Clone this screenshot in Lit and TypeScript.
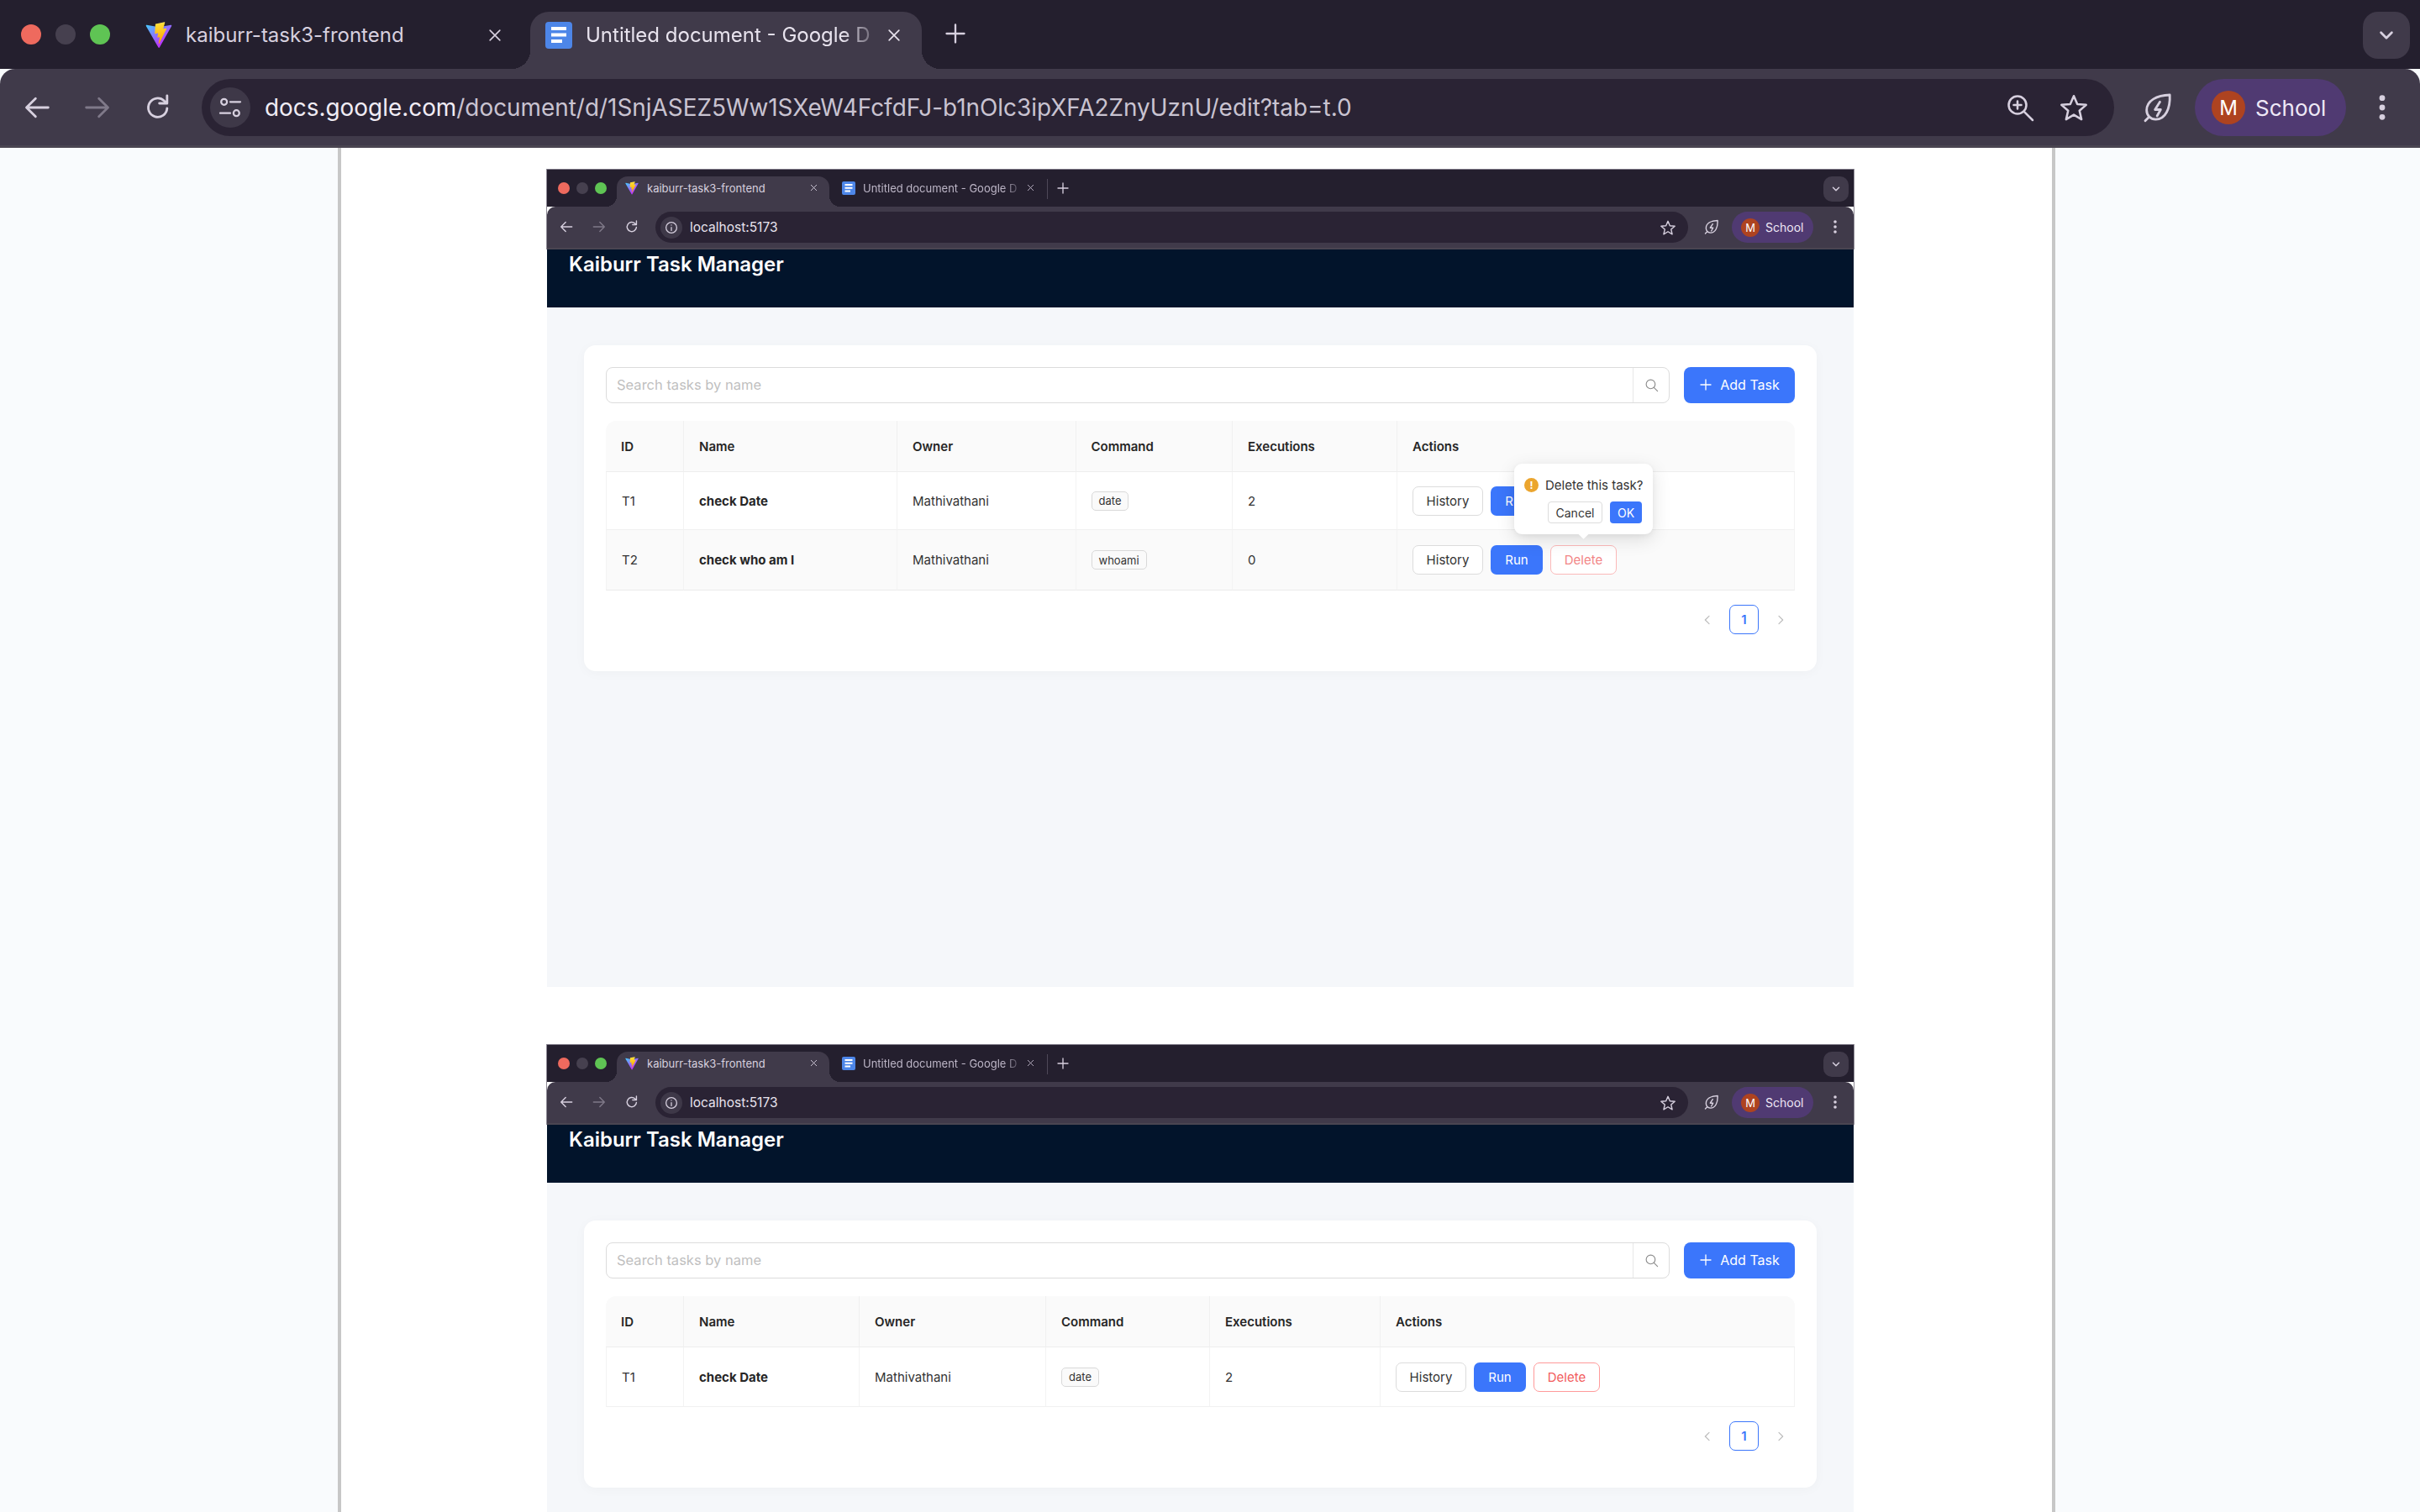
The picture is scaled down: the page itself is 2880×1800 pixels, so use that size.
import { LitElement, html, css, svg } from "lit";
import { customElement, property } from "lit/decorators.js";

const ic = (body: unknown, cls = "", sw = 2) => html`<svg class=${cls} viewBox="0 0 24 24" fill="none" stroke="currentColor" stroke-width=${sw} stroke-linecap="round" stroke-linejoin="round">${body}</svg>`;
const back = (c = "") => ic(svg`<path d="M20 12H5M11 5.500 4.500 12l6.500 6.500"/>`, c);
const fwd = (c = "") => ic(svg`<path d="M4 12h15M13 5.500l6.500 6.500-6.500 6.500"/>`, c);
const reload = (c = "") => ic(svg`<path d="M18.500 12.500a6.700 6.700 0 1 1-2.100-5.300L18.500 9M18.500 3.500V9H13"/>`, c);
const tune = (c = "") => ic(svg`<circle cx="6.500" cy="7" r="2.600"/><path d="M12 7h9M3 17h9"/><circle cx="17.500" cy="17" r="2.600"/>`, c);
const info = (c = "") => ic(svg`<circle cx="12" cy="12" r="8.500"/><path d="M12 11.500v5M12 7.800v.2"/>`, c);
const zoomI = (c = "") => ic(svg`<circle cx="10" cy="10" r="7"/><path d="M15.200 15.200 22 22M10 7v6M7 10h6"/>`, c);
const star = (c = "") => ic(svg`<path d="m12 2.800 2.800 6.500 7 .6-5.300 4.600 1.600 6.900-6.100-3.700-6.100 3.700 1.600-6.900-5.300-4.600 7-.6z"/>`, c);
const leaf = (c = "") => ic(svg`<path d="M20.500 3c-9 .3-16.500 3.800-16.500 11 0 3.600 2.800 6.500 6.500 6.500 7 0 10.500-8 10-17.500zM3 21.500l2.600-2.600M13.500 8 10 13.500h4L11.500 18"/>`, c);
const chev = (c = "") => ic(svg`<path d="m5 8.500 7 7 7-7"/>`, c, 3);
const xI = (c = "") => ic(svg`<path d="M5 5l14 14M19 5 5 19"/>`, c);
const plus = (c = "") => ic(svg`<path d="M12 3v18M3 12h18"/>`, c);
const dots = (c = "") => html`<svg class=${c} viewBox="0 0 24 24" fill="currentColor"><circle cx="12" cy="4" r="2.400"/><circle cx="12" cy="12" r="2.400"/><circle cx="12" cy="20" r="2.400"/></svg>`;
const search = (c = "") => ic(svg`<circle cx="10.500" cy="10.500" r="7.500"/><path d="m16 16 6 6"/>`, c, 1.6);
const left = (c = "") => ic(svg`<path d="m15 5-7 7 7 7"/>`, c, 1.8);
const right = (c = "") => ic(svg`<path d="m9 5 7 7-7 7"/>`, c, 1.8);

let gid = 0;
const vite = (c = "") => {
  const a = `va${++gid}`, b = `vb${gid}`;
  return html`<svg class=${c} viewBox="0 0 410 404">
    <defs>
      <linearGradient id=${a} x1="6" y1="33" x2="235" y2="344" gradientUnits="userSpaceOnUse"><stop stop-color="#41D1FF"/><stop offset="1" stop-color="#BD34FE"/></linearGradient>
      <linearGradient id=${b} x1="194" y1="8" x2="236" y2="293" gradientUnits="userSpaceOnUse"><stop stop-color="#FFEA83"/><stop offset=".08" stop-color="#FFDD35"/><stop offset="1" stop-color="#FFA800"/></linearGradient>
    </defs>
    <path fill="url(#${a})" d="M399.641 59.525 215.643 388.545c-3.799 6.793-13.559 6.833-17.415.073L10.582 59.556C6.38 52.19 12.68 43.266 21.028 44.76l184.195 32.923c1.175.21 2.378.208 3.553-.006l180.343-32.87c8.32-1.517 14.649 7.337 10.522 14.718Z"/>
    <path fill="url(#${b})" d="M292.965 1.574 156.801 28.255a5 5 0 0 0-4.03 4.611l-8.376 141.464c-.197 3.332 2.863 5.918 6.115 5.168l37.91-8.749c3.547-.818 6.752 2.306 6.023 5.873l-11.263 55.153c-.758 3.712 2.727 6.886 6.352 5.785l23.415-7.114c3.63-1.102 7.118 2.081 6.35 5.796l-17.899 86.633c-1.12 5.419 6.088 8.374 9.094 3.728l2.008-3.103 110.954-221.428c1.858-3.707-1.346-7.935-5.418-7.15l-39.022 7.532c-3.667.707-6.787-2.708-5.752-6.296l25.469-88.291c1.036-3.594-2.095-7.012-5.766-6.293Z"/>
  </svg>`;
};
const docs = (c = "") => html`<svg class=${c} viewBox="0 0 32 32"><rect width="32" height="32" rx="4" fill="#4d86e8"/><rect x="7" y="6" width="18" height="4" fill="#fff"/><rect x="7" y="13.500" width="18" height="4" fill="#fff"/><rect x="7" y="21" width="13" height="4" fill="#fff"/></svg>`;

const sharedChrome = css`
  svg { display: block; flex: none; }
  .strip { display: flex; background: #241f2e; color: #d7d0df; align-items: flex-end; }
  .lights { display: flex; align-self: flex-start; }
  .dot { border-radius: 50%; display: block; }
  .red { background: #ee6a5e; }
  .gray { background: #46404f; }
  .green { background: #5fc454; }
  .tab { display: flex; align-items: center; position: relative; box-sizing: border-box; }
  .tab.active { background: #403a4a; border-radius: var(--r) var(--r) 0 0; }
  .tab.active::before, .tab.active::after {
    content: ""; position: absolute; bottom: 0; width: var(--r); height: var(--r);
  }
  .tab.active::before { right: 100%; background: radial-gradient(circle at 0 0, transparent var(--r), #403a4a var(--r)); }
  .tab.active::after { left: 100%; background: radial-gradient(circle at 100% 0, transparent var(--r), #403a4a var(--r)); }
  .title { flex: 1; min-width: 0; white-space: nowrap; }
  .fade { -webkit-mask-image: linear-gradient(90deg, #000 88%, rgba(0,0,0,.15) 100%); mask-image: linear-gradient(90deg, #000 88%, rgba(0,0,0,.15) 100%); }
  .spacer { flex: 1; }
  .chevpill { display: flex; align-items: center; justify-content: center; background: #403a4a; align-self: flex-start; }
  .toolbar { display: flex; background: #403a4a; color: #d7d0df; box-sizing: border-box; align-items: flex-start; }
  .dim { color: #7f7989; }
  .omni { display: flex; flex: 1; min-width: 0; align-items: center; background: #2a2334; box-sizing: border-box; }
  .site { display: flex; align-items: center; justify-content: center; background: #3e3848; border-radius: 50%; flex: none; }
  .url { flex: 1; min-width: 0; white-space: nowrap; color: #c9c3d1; }
  .url b { font-weight: 400; color: #f0ecf4; }
  .pill { display: flex; align-items: center; background: #503a72; flex: none; box-sizing: border-box; color: #eee8f6; }
  .avatar { display: flex; align-items: center; justify-content: center; border-radius: 50%; background: #ae4320; color: #fff; flex: none; }
`;

@customElement("outer-chrome")
class OuterChrome extends LitElement {
  static styles = [sharedChrome, css`
    :host { display: block; --r: 22px; font-family: Inter, "Liberation Sans", sans-serif; }
    .strip { height: 82px; padding: 0 12px 0 25px; }
    .lights { gap: 17px; margin-top: 29px; }
    .dot { width: 24px; height: 24px; }
    .tab { height: 68px; padding-bottom: 13px; font-size: 24px; }
    .t1 { width: 480px; margin-left: 20px; padding-left: 22px; color: #d7d0df; }
    .t2 { width: 466px; padding-left: 18px; color: #e8e3ee; }
    .fav { width: 32px; height: 32px; }
    .t1 .title { margin-left: 16px; }
    .t2 .title { margin-left: 16px; }
    .x { width: 20px; height: 20px; }
    .t1 .x { margin-right: 32px; }
    .t2 .x { margin-right: 23px; margin-left: 10px; }
    .plus { width: 28px; height: 28px; margin: 0 0 28px 26px; }
    .chevpill { width: 56px; height: 56px; border-radius: 18px; margin-top: 14px; }
    .chev { width: 22px; height: 22px; }
    .toolbar { height: 94px; padding: 12px 28px 0 24px; border-bottom: 3px solid #4a4551; border-radius: 18px 18px 0 0; }
    .toolbar svg { stroke-width: 1.700; }
    .nav { width: 40px; height: 40px; margin: 14px 32px 0 0; }
    .omni { height: 68px; border-radius: 34px; padding: 0 30px 0 10px; }
    .site { width: 48px; height: 48px; }
    .site svg { width: 32px; height: 32px; }
    .url { margin-left: 17px; font-size: 27.900px; }
    .oi { width: 36px; height: 36px; }
    .oi.z { margin-right: 28px; }
    .leaf { width: 40px; height: 40px; margin: 14px 24px 0 32px; }
    .pill { width: 180px; height: 68px; border-radius: 34px; padding-left: 20px; font-size: 26px; }
    .avatar { width: 40px; height: 40px; font-size: 24px; margin-right: 12px; }
    .dots { width: 34px; height: 34px; margin: 17px 0 0 26px; }
  `];
  render() {
    return html`
      <div class="strip">
        <div class="lights"><span class="dot red"></span><span class="dot gray"></span><span class="dot green"></span></div>
        <div class="tab t1">${vite("fav")}<span class="title">kaiburr-task3-frontend</span>${xI("x")}</div>
        <div class="tab t2 active">${docs("fav")}<span class="title fade">Untitled document - Google D</span>${xI("x")}</div>
        ${plus("plus")}
        <div class="spacer"></div>
        <div class="chevpill">${chev("chev")}</div>
      </div>
      <div class="toolbar">
        ${back("nav")}${fwd("nav dim")}${reload("nav")}
        <div class="omni">
          <div class="site">${tune()}</div>
          <div class="url"><b>docs.google.com</b>/document/d/1SnjASEZ5Ww1SXeW4FcfdFJ-b1nOlc3ipXFA2ZnyUznU/edit?tab=t.0</div>
          ${zoomI("oi z")}${star("oi")}
        </div>
        ${leaf("leaf")}
        <div class="pill"><span class="avatar">M</span>School</div>
        ${dots("dots")}
      </div>
    `;
  }
}

interface Row { id: string; name: string; owner: string; cmd: string; runs: number; h: number; hover?: boolean; }

@customElement("task-shot")
class TaskShot extends LitElement {
  @property({ type: Array }) cols: number[] = [];
  @property({ type: Array }) rows: Row[] = [];
  @property({ type: Boolean }) confirm = false;

  static styles = [sharedChrome, css`
    :host { display: block; --r: 13px; width: 1555px; font-family: Inter, "Liberation Sans", sans-serif; }
    .frame { border-top: 1px solid #7f7a88; box-shadow: -1px 0 0 #8d8994, 1px 0 0 #8d8994; }
    .strip { height: 44px; padding: 0 6px 0 13px; }
    .lights { gap: 8px; margin-top: 15px; }
    .dot { width: 14px; height: 14px; }
    .tab { height: 36px; padding-bottom: 9px; font-size: 13px; }
    .t1 { width: 253px; margin-left: 12px; padding-left: 10px; }
    .t2 { width: 259px; padding-left: 15px; color: #bdb6c7; }
    .sep { width: 1px; height: 24px; background: #4e4858; margin-bottom: 9px; flex: none; }
    .fav { width: 16px; height: 16px; }
    .t2 .fav { height: 18px; }
    .t1 .title { margin-left: 10px; }
    .t2 .title { margin-left: 9px; }
    .x { width: 11px; height: 11px; }
    .t1 .x { margin-right: 13px; }
    .t2 .x { margin-right: 14px; margin-left: 5px; }
    .plus { width: 16px; height: 16px; margin: 0 0 14px 10px; }
    .chevpill { width: 30px; height: 30px; border-radius: 10px; margin-top: 8px; }
    .chev { width: 12px; height: 12px; }
    .toolbar { height: 51px; padding: 6px 13px 0; border-radius: 10px 10px 0 0; border-bottom: 2px solid #4a4551; }
    .toolbar svg { stroke-width: 1.700; }
    .nav { width: 20px; height: 20px; margin: 8px 19px 0 0; }
    .nav.last { margin-right: 18px; }
    .omni { height: 37px; border-radius: 19px; padding: 0 14px 0 6px; }
    .site { width: 26px; height: 26px; }
    .site svg { width: 18px; height: 18px; }
    .url { margin-left: 9px; font-size: 15.500px; color: #e8e3ee; }
    .oi { width: 20px; height: 20px; }
    .leaf { width: 20px; height: 20px; margin: 8px 14px 0 18px; }
    .pill { width: 97px; height: 37px; border-radius: 19px; padding-left: 11px; font-size: 14px; }
    .avatar { width: 22px; height: 22px; font-size: 13px; margin-right: 7px; }
    .dots { width: 18px; height: 18px; margin: 9px 0 0 17px; }

    .header { height: 69px; box-sizing: border-box; background: #02142b; color: #fff; padding-left: 26px; font-size: 24px; font-weight: 600; line-height: 36px; }
    .main { background: #f5f7fa; padding: 45px 44px 0; min-height: 764px; box-sizing: content-box; }
    .card { background: #fff; border-radius: 14px; padding: 26px 26px 44px; box-shadow: 0 2px 14px rgba(0,0,0,.03); }
    .bar { display: flex; gap: 17px; }
    .searchbox { flex: 1; display: flex; height: 43px; box-sizing: border-box; border: 1.500px solid #dcdcdc; border-radius: 8px; overflow: hidden; }
    input { flex: 1; border: 0; outline: 0; padding: 0 12px 2px; font: inherit; font-size: 16.500px; background: transparent; min-width: 0; }
    input::placeholder { color: #bfbfbf; opacity: 1; }
    .sbtn { width: 42px; flex: none; display: flex; align-items: center; justify-content: center; border-left: 1px solid #e8e8e8; color: #8c8c8c; }
    .sbtn svg { width: 17px; height: 17px; }
    .add { width: 132px; height: 43px; box-sizing: border-box; padding-bottom: 1px; flex: none; display: flex; align-items: center; justify-content: center; gap: 9px; border-radius: 8px; background: #3b76fb; color: #fff; font-size: 16px; }
    .add svg { width: 16px; height: 16px; }

    table { width: 1415px; table-layout: fixed; border-collapse: separate; border-spacing: 0; margin-top: 21px; font-size: 15px; color: #333; }
    th { height: 61px; box-sizing: border-box; text-align: left; background: #fafafa; font-weight: 600; color: #262626; padding: 0 18px; border-bottom: 1px solid #eee; border-right: 1px solid #f0f0f0; }
    th:first-child { border-top-left-radius: 12px; }
    th:last-child { border-top-right-radius: 12px; border-right: 0; }
    td { box-sizing: border-box; padding: 0 18px; border-bottom: 1px solid #f0f0f0; border-right: 1px solid #f3f3f3; }
    td:first-child { border-left: 1px solid #f3f3f3; }
    tr.hover td { background: #fafafa; border-bottom-color: #ebebeb; }
    .name { font-weight: 700; color: #262626; }
    .tag { display: inline-flex; align-items: center; height: 23px; box-sizing: border-box; padding: 0 8px; background: #fafafa; border: 1px solid #d9d9d9; border-radius: 5px; font-size: 13px; vertical-align: middle; }
    .actions { position: relative; display: flex; gap: 9px; }
    .btn { height: 35px; box-sizing: border-box; display: flex; align-items: center; justify-content: center; border-radius: 7px; font-size: 15px; flex: none; }
    .hist { width: 84px; background: #fff; border: 1.500px solid #dcdcdc; color: #333; }
    .run { width: 62px; background: #3b76fb; color: #fff; }
    .del { width: 79px; background: #fff; border: 1.500px solid #ff9a9a; color: #f25c5c; }
    .del.soft { border-color: #fbb9b9; color: #f28686; }

    .pop { position: absolute; left: 121px; top: -97px; width: 165px; height: 84px; box-sizing: border-box; z-index: 2; background: #fff; border-radius: 9px; box-shadow: 0 6px 22px rgba(0,0,0,.12), 0 2px 6px rgba(0,0,0,.05); padding: 12px 12px 0; color: #333; }
    .pop::after { content: ""; position: absolute; left: 78px; bottom: -4px; width: 9px; height: 9px; background: #fff; transform: rotate(45deg); }
    .ptext { display: flex; align-items: center; gap: 8px; height: 26px; font-size: 15px; white-space: nowrap; }
    .warn { width: 17px; height: 17px; border-radius: 50%; background: #eba52e; color: #fff; font-size: 12px; font-weight: 700; display: flex; align-items: center; justify-content: center; flex: none; }
    .pbtns { display: flex; justify-content: flex-end; gap: 9px; margin: 7px 1px 0 0; }
    .pbtns div { height: 26px; box-sizing: border-box; display: flex; align-items: center; justify-content: center; border-radius: 4px; font-size: 14px; }
    .cancel { width: 65px; border: 1.500px solid #dcdcdc; }
    .ok { width: 38px; background: #3b76fb; color: #fff; }

    .pager { display: flex; justify-content: flex-end; align-items: center; margin-top: 17px; padding-right: 9px; color: #bdbdbd; }
    .pager svg { width: 16px; height: 16px; }
    .page { width: 35px; height: 35px; box-sizing: border-box; margin: 0 18px; border: 1.500px solid #3b76fb; border-radius: 7px; color: #3b76fb; display: flex; align-items: center; justify-content: center; font-size: 15px; font-weight: 600; }
  `];

  render() {
    return html`
      <div class="frame">
        <div class="strip">
          <div class="lights"><span class="dot red"></span><span class="dot gray"></span><span class="dot green"></span></div>
          <div class="tab t1 active">${vite("fav")}<span class="title">kaiburr-task3-frontend</span>${xI("x")}</div>
          <div class="tab t2">${docs("fav")}<span class="title fade">Untitled document - Google D</span>${xI("x")}</div>
          <div class="sep"></div>
          ${plus("plus")}
          <div class="spacer"></div>
          <div class="chevpill">${chev("chev")}</div>
        </div>
        <div class="toolbar">
          ${back("nav")}${fwd("nav dim")}${reload("nav last")}
          <div class="omni">
            <div class="site">${info()}</div>
            <div class="url">localhost:5173</div>
            ${star("oi")}
          </div>
          ${leaf("leaf")}
          <div class="pill"><span class="avatar">M</span>School</div>
          ${dots("dots")}
        </div>
      </div>
      <div class="header">Kaiburr Task Manager</div>
      <div class="main">
        <div class="card">
          <div class="bar">
            <div class="searchbox"><input placeholder="Search tasks by name" /><div class="sbtn">${search()}</div></div>
            <div class="add">${plus()}Add Task</div>
          </div>
          <table>
            <colgroup>${this.cols.map((w) => html`<col style="width:${w}px" />`)}</colgroup>
            <thead><tr><th>ID</th><th>Name</th><th>Owner</th><th>Command</th><th>Executions</th><th>Actions</th></tr></thead>
            <tbody>
              ${this.rows.map((r) => html`
                <tr class=${r.hover ? "hover" : ""} style="height:${r.h}px">
                  <td>${r.id}</td><td class="name">${r.name}</td><td>${r.owner}</td>
                  <td><span class="tag">${r.cmd}</span></td><td>${r.runs}</td>
                  <td><div class="actions">
                    <div class="btn hist">History</div><div class="btn run">Run</div>
                    <div class="btn del ${r.hover ? "soft" : ""}">Delete</div>
                    ${this.confirm && r.hover ? html`<div class="pop">
                      <div class="ptext"><span class="warn">!</span>Delete this task?</div>
                      <div class="pbtns"><div class="cancel">Cancel</div><div class="ok">OK</div></div>
                    </div>` : ""}
                  </div></td>
                </tr>`)}
            </tbody>
          </table>
          <div class="pager">${left()}<div class="page">1</div>${right()}</div>
        </div>
      </div>
    `;
  }
}

@customElement("app-root")
export class AppRoot extends LitElement {
  static styles = css`
    :host { display: block; width: 2880px; height: 1800px; overflow: hidden; background: #f9fbfd; }
    .docarea { height: 1624px; overflow: hidden; padding-left: 402px; }
    .page { width: 2044px; height: 100%; box-sizing: border-box; background: #fff; border-left: 4px solid #c7c7c7; border-right: 4px solid #c7c7c7; padding: 25px 0 0 245px; display: flex; flex-direction: column; gap: 68px; }
  `;
  render() {
    const a: Row[] = [
      { id: "T1", name: "check Date", owner: "Mathivathani", cmd: "date", runs: 2, h: 69 },
      { id: "T2", name: "check who am I", owner: "Mathivathani", cmd: "whoami", runs: 0, h: 72, hover: true },
    ];
    const b: Row[] = [{ id: "T1", name: "check Date", owner: "Mathivathani", cmd: "date", runs: 2, h: 71 }];
    return html`
      <outer-chrome></outer-chrome>
      <div class="docarea">
        <div class="page">
          <task-shot .cols=${[93, 254, 212.5, 186.5, 196, 473]} .rows=${a} confirm></task-shot>
          <task-shot .cols=${[93, 209, 222, 195, 203, 493]} .rows=${b}></task-shot>
        </div>
      </div>
    `;
  }
}
